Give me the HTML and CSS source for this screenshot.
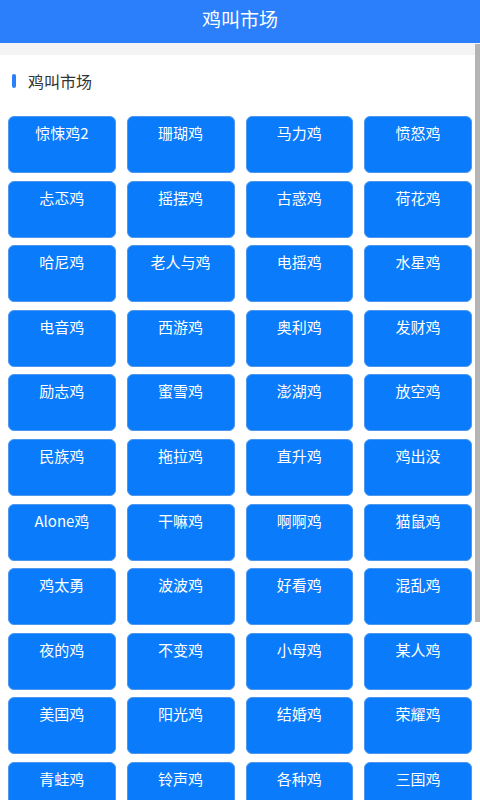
FILE: index.html
```html
<!DOCTYPE html>
<html lang="zh">
<head>
<meta charset="utf-8">
<link rel="stylesheet" href="styles.css">
</head>
<body>
<div class="app">
  <header class="topbar">鸡叫市场</header>
  <div class="body">
    <div class="divider"></div>
    <div class="section-title"><span class="mark"></span><span>鸡叫市场</span></div>
    <div class="grid">
      <div class="btn">惊悚鸡2</div><div class="btn">珊瑚鸡</div><div class="btn">马力鸡</div><div class="btn">愤怒鸡</div>
      <div class="btn">忐忑鸡</div><div class="btn">摇摆鸡</div><div class="btn">古惑鸡</div><div class="btn">荷花鸡</div>
      <div class="btn">哈尼鸡</div><div class="btn">老人与鸡</div><div class="btn">电摇鸡</div><div class="btn">水星鸡</div>
      <div class="btn">电音鸡</div><div class="btn">西游鸡</div><div class="btn">奥利鸡</div><div class="btn">发财鸡</div>
      <div class="btn">励志鸡</div><div class="btn">蜜雪鸡</div><div class="btn">澎湖鸡</div><div class="btn">放空鸡</div>
      <div class="btn">民族鸡</div><div class="btn">拖拉鸡</div><div class="btn">直升鸡</div><div class="btn">鸡出没</div>
      <div class="btn">Alone鸡</div><div class="btn">干嘛鸡</div><div class="btn">啊啊鸡</div><div class="btn">猫鼠鸡</div>
      <div class="btn">鸡太勇</div><div class="btn">波波鸡</div><div class="btn">好看鸡</div><div class="btn">混乱鸡</div>
      <div class="btn">夜的鸡</div><div class="btn">不变鸡</div><div class="btn">小母鸡</div><div class="btn">某人鸡</div>
      <div class="btn">美国鸡</div><div class="btn">阳光鸡</div><div class="btn">结婚鸡</div><div class="btn">荣耀鸡</div>
      <div class="btn">青蛙鸡</div><div class="btn">铃声鸡</div><div class="btn">各种鸡</div><div class="btn">三国鸡</div>
    </div>
    <div class="scrollbar"></div>
  </div>
</div>
</body>
</html>
```
FILE: styles.css
```css
html, body {
  margin: 0;
  padding: 0;
  overflow: hidden;
  background: #ffffff;
}
body {
  font-family: "Noto Sans CJK SC", "Noto Sans", sans-serif;
}
.app {
  width: 480px;
  height: 800px;
  display: flex;
  flex-direction: column;
  overflow: hidden;
}
.topbar {
  height: 43px;
  flex: none;
  background: #2b7ffb;
  color: #ffffff;
  font-size: 19px;
  line-height: 37px;
  text-align: center;
}
.body {
  position: relative;
  flex: 1;
  overflow: hidden;
}
.divider {
  height: 12px;
  background: #f4f4f4;
}
.section-title {
  display: flex;
  align-items: center;
  gap: 12px;
  padding: 11px 0 0 12px;
  height: 30px;
  font-size: 16px;
  color: #333333;
  margin-bottom: 20px;
}
.mark {
  width: 4px;
  height: 14px;
  border-radius: 2px;
  background: #2b7ffb;
}
.grid {
  display: grid;
  grid-template-columns: repeat(4, 1fr);
  column-gap: 11px;
  row-gap: 7.6px;
  padding: 0 8px;
}
.btn {
  height: 57px;
  box-sizing: border-box;
  background: #0a7bfa;
  border: 1px solid #4d97ee;
  border-radius: 6px;
  color: #ffffff;
  font-size: 15px;
  line-height: 20px;
  padding-top: 6px;
  text-align: center;
}
.scrollbar {
  position: absolute;
  top: 1px;
  right: 0;
  width: 5px;
  height: 578px;
  background: #b4b4b4;
}
```
